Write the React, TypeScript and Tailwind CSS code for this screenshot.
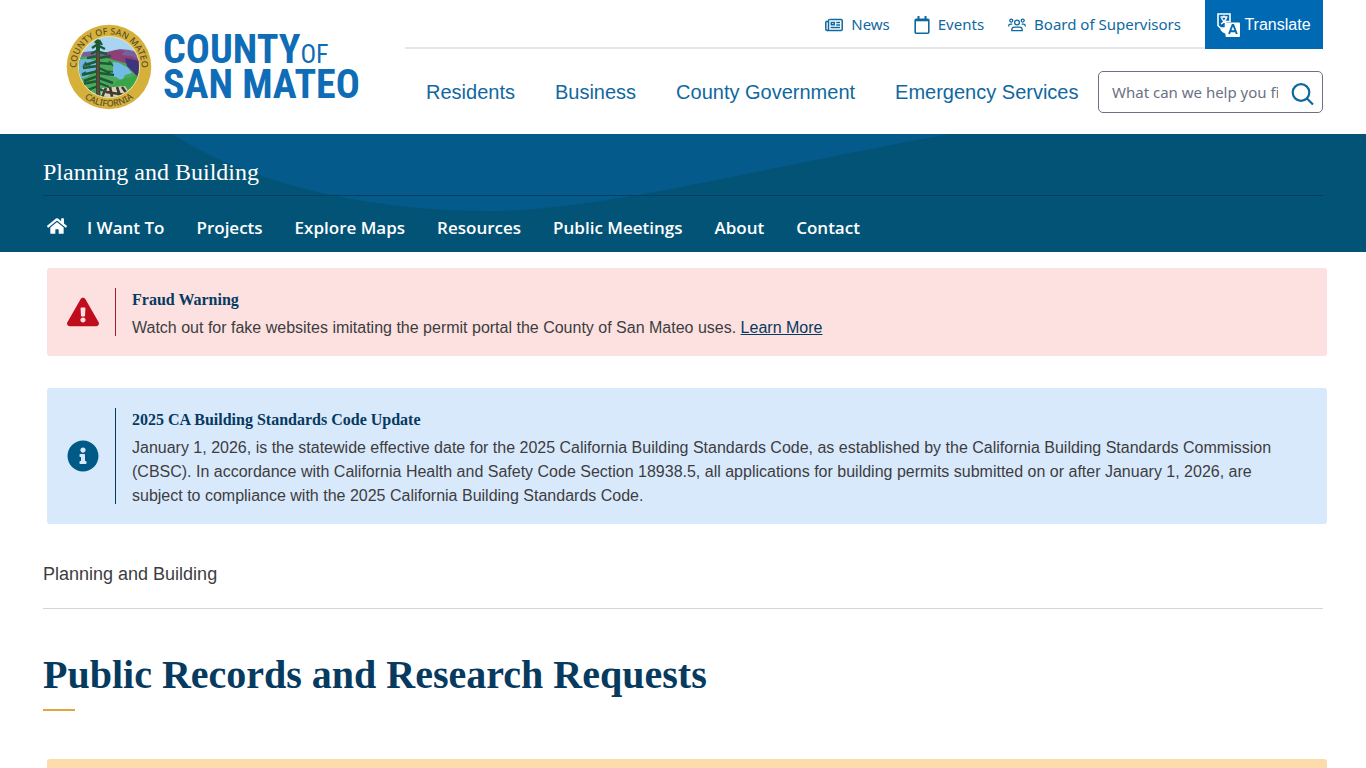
import { FaHome, FaExclamationTriangle, FaInfoCircle } from "react-icons/fa";

const topLinks = [
  { label: "News", icon: NewsIcon },
  { label: "Events", icon: CalendarIcon },
  { label: "Board of Supervisors", icon: PeopleIcon },
];

const mainLinks = ["Residents", "Business", "County Government", "Emergency Services"];

const departmentLinks = [
  "I Want To",
  "Projects",
  "Explore Maps",
  "Resources",
  "Public Meetings",
  "About",
  "Contact",
];

function NewsIcon() {
  return (
    <svg className="w-[18px] h-4" viewBox="0 0 18 16" fill="none" stroke="currentColor" strokeWidth="1.5">
      <path d="M4.5 2.500h11.500c.7 0 1.200.5 1.200 1.200v8.600c0 .7-.5 1.200-1.200 1.200H2.300c-.8 0-1.500-.7-1.500-1.500V4.500" />
      <path d="M.8 4.500h2.700M3.500 12V3.500c0-.6.4-1 1-1M3.500 12c0 .9-.4 1.500-1.200 1.500" />
      <path d="M6.300 5.500h3v2.300h-3zM11.200 5.400h3.800M11.200 8h3.800M5.600 10.600H15" />
    </svg>
  );
}

function CalendarIcon() {
  return (
    <svg className="w-4 h-[18px]" viewBox="0 0 16 18" fill="none" stroke="currentColor">
      <path d="M2.200 3.200h11.600c.6 0 1 .4 1 1v12c0 .6-.4 1-1 1H2.200c-.6 0-1-.4-1-1v-12c0-.6.4-1 1-1z" strokeWidth="1.600" />
      <path d="M1.500 4.500h13" strokeWidth="1.600" />
      <path d="M4.500 0v4M11.500 0v4" strokeWidth="2" />
    </svg>
  );
}

function PeopleIcon() {
  return (
    <svg className="w-[18px] h-4" viewBox="0 0 18 16" fill="none" stroke="currentColor" strokeWidth="1.3">
      <circle cx="3.300" cy="3.600" r="1.500" />
      <circle cx="14.700" cy="3.600" r="1.500" />
      <circle cx="9" cy="5.500" r="2.400" />
      <path d="M.7 9.400V9c0-1 .8-1.800 1.800-1.800h1.800M17.300 9.400V9c0-1-.8-1.800-1.800-1.800h-1.800" />
      <path d="M3.800 13.600v-.8c0-1.500 1.200-2.700 2.700-2.700h5c1.500 0 2.700 1.200 2.700 2.700v.8z" />
    </svg>
  );
}

function TranslateIcon() {
  return (
    <svg className="w-[23px] h-6" viewBox="0 0 23 24" fill="none">
      <path d="M1 1h12v7.500H8.500V15H3.500L1 12.500z" stroke="#fff" strokeWidth="1.600" />
      <path d="M3.500 4h7M7 2.500V4M9.500 4.500C8.500 7.500 6.500 9.500 4 11M4.500 5c1 2.300 2.500 4 5 5.500" stroke="#fff" strokeWidth="1.400" />
      <path d="M3 15.500c1 2.800 3 4.500 6 5.500v-6z" fill="#fff" />
      <rect x="8.500" y="9.500" width="14.500" height="14.500" rx="1" fill="#fff" />
      <path d="M12 21l3.500-9h.8l3.500 9M13.300 18.200h5.200" stroke="#0069b4" strokeWidth="1.900" />
    </svg>
  );
}

function SearchIcon() {
  return (
    <svg className="w-6 h-6" viewBox="0 0 24 24" fill="none" stroke="currentColor" strokeWidth="2.2">
      <circle cx="11" cy="10.500" r="8.300" />
      <path d="M17 16.500l6 6" />
    </svg>
  );
}

function Seal() {
  return (
    <svg className="w-[86px] h-[86px]" viewBox="0 0 86 86" role="img" aria-label="County seal">
      <defs>
        <clipPath id="scene">
          <circle cx="43" cy="43" r="30" />
        </clipPath>
        <path id="arc-top" d="M12.300 54a32.600 32.600 0 1 1 61.400 0" />
        <path id="arc-bottom" d="M3.500 43a39.500 39.500 0 0 0 79 0" />
      </defs>
      <circle cx="43" cy="43" r="42.300" fill="#d5b13c" />
      <circle cx="43" cy="43" r="31" fill="#eee3a0" />
      <g clipPath="url(#scene)">
        <rect width="86" height="86" fill="#a9d4f2" />
        <path d="M10 31l8-3 9-1 10 2 8-2 9-2 10 1 12 4v12H10z" fill="#78619b" />
        <path d="M40 29l10-3 9 1-4 4 10 1 12 5v7l-18-4-19-5z" fill="#8d3f78" />
        <path d="M10 34c12-3 27-2 38 2l28 8v35H10z" fill="#4ba95a" />
        <path d="M11 36c9-2 17-1 22 3l-4 7-8 7-8 2z" fill="#70b5df" />
        <path d="M47 38c6 0 9 3 14 5l5 6-7 2-3 6-6-4-7-1 4-5z" fill="#71bce5" />
        <path d="M59 34l16 3v20l-7-8-7-7z" fill="#3d347c" />
        <path d="M51 57c8-4 15-2 24-8v23H38z" fill="#37a548" />
        <path d="M36 64l23-2 9 14H34z" fill="#d8d1bb" />
        <path d="M40 64l-4 9M44 63l2 10M51 63l3 9M56 63l6 8M40 68l20 3" stroke="#44372d" strokeWidth="2.600" />
        <path d="M32 74V16" stroke="#1d5937" strokeWidth="4" />
        {/* branches, top to bottom */}
        <path
          d="M32 15l-3 4M33 16l3 5M32 20l-6 4M33 22l6 3M32 26l-7 4M33 28l8 2M32 32l-11 2M33 34l12-2M32 37l-13 4M33 39l13 1M32 42l-15 2M33 44l11 5M32 47l-16 4M33 49l15 2M32 52l-14 5M33 54l14 5M32 57l-16 3M33 59l10 4M32 62l-13 5M33 65l8 3"
          stroke="#1d5937"
          strokeWidth="2.400"
        />
        <path d="M20 38l-3 5M24 40l-2 4M43 37l4 5M20 48l-4 2M42 47l5 1M21 58l-4 5M26 64l-5 6" stroke="#24643d" strokeWidth="1.600" />
        <path d="M32 28v46" stroke="#8a3a38" strokeWidth="1.800" />
      </g>
      <text className="font-['Noto_Sans',sans-serif] font-medium text-[9px]" fill="#5d4f26">
        <textPath href="#arc-top" startOffset="50%" textAnchor="middle">
          COUNTY OF SAN MATEO
        </textPath>
      </text>
      <text className="font-['Noto_Sans',sans-serif] font-medium text-[9px]" fill="#5d4f26">
        <textPath href="#arc-bottom" startOffset="50%" textAnchor="middle">
          CALIFORNIA
        </textPath>
      </text>
    </svg>
  );
}

function Header() {
  return (
    <header className="max-w-[1280px] h-[134px] mx-auto flex justify-between">
      <a href="#" className="flex items-center gap-[11px] pl-[23px] text-[#0f6cb6]">
        <Seal />
        <span className="flex flex-col font-['Roboto_Condensed',Roboto,sans-serif] font-bold text-[40px] leading-[35px] whitespace-nowrap">
          <span>
            COUNTY<span className="text-[26px] leading-none font-normal">OF</span>
          </span>
          <span>SAN MATEO</span>
        </span>
      </a>
      <div className="w-[918px]">
        <div className="flex">
          <nav className="flex-1 flex justify-end items-center gap-6 pt-[2px] pr-6 border-b-2 border-gray-200 font-['Noto_Sans',sans-serif] text-[15px] text-[#0f689f]">
            {topLinks.map(({ label, icon: Icon }) => (
              <a key={label} href="#" className="flex items-center gap-2">
                <Icon />
                {label}
              </a>
            ))}
          </nav>
          <button className="w-[118px] h-[49px] flex items-center justify-center gap-1 bg-[#0069b4] text-white text-base">
            <TranslateIcon />
            Translate
          </button>
        </div>
        <div className="flex items-center justify-between pl-[21px] pt-[22px]">
          <nav className="flex gap-10 text-xl text-[#0f689f]">
            {mainLinks.map((label) => (
              <a key={label} href="#" className="whitespace-nowrap">
                {label}
              </a>
            ))}
          </nav>
          <form className="w-[225px] h-[42px] flex items-center pl-[13px] pr-2 gap-3 border border-gray-500 rounded-[5px]">
            <input
              type="text"
              aria-label="Search"
              placeholder="What can we help you find?"
              className="flex-1 min-w-0 font-['Noto_Sans',sans-serif] text-[15px] placeholder:text-gray-500 outline-none"
            />
            <button type="button" aria-label="Submit search" className="pt-1 text-[#0f689f]">
              <SearchIcon />
            </button>
          </form>
        </div>
      </div>
    </header>
  );
}

function DepartmentBar() {
  return (
    <div className="relative h-[118px] overflow-hidden bg-[#035377] text-white">
      <svg className="absolute left-0 top-0 w-[1366px] h-[118px]" viewBox="0 0 1366 118" aria-hidden="true">
        <path d="M172 0C250 50 370 77 485 77C600 77 740 38 950 0z" fill="#045a8a" />
      </svg>
      <div className="relative max-w-[1280px] mx-auto">
        <div className="h-[62px] pt-6 border-b border-[#063d63]">
          <a href="#" className="font-['Liberation_Serif',serif] text-2xl leading-7">
            Planning and Building
          </a>
        </div>
        <nav className="flex items-center gap-8 pt-5 pl-1 font-['Open_Sans',sans-serif] font-semibold text-[17px] leading-6">
          <a href="#" aria-label="Home" className="-mr-3 pb-1">
            <FaHome className="w-5 h-5" />
          </a>
          {departmentLinks.map((label) => (
            <a key={label} href="#">
              {label}
            </a>
          ))}
        </nav>
      </div>
    </div>
  );
}

export default function App() {
  return (
    <div className="h-screen overflow-hidden bg-white font-['Liberation_Sans',sans-serif] text-[#3d3d3f]">
      <Header />
      <DepartmentBar />
      <main className="max-w-[1280px] mx-auto pt-4">
        <section className="ml-1 -mr-1 mb-8 py-5 pl-5 pr-12 flex items-center rounded-[3px] bg-[#fce1e0]">
          <FaExclamationTriangle className="w-8 h-8 mr-4 shrink-0 text-[#c00d1e]" />
          <div className="border-l border-[#a61c2b] pl-4">
            <h2 className="mb-1 font-['Liberation_Serif',serif] font-bold text-base text-[#063a5f]">Fraud Warning</h2>
            <p className="-mb-1 leading-6">
              Watch out for fake websites imitating the permit portal the County of San Mateo uses.{" "}
              <a href="#" className="underline text-[#063a5f]">
                Learn More
              </a>
            </p>
          </div>
        </section>
        <section className="ml-1 -mr-1 py-5 pl-5 pr-12 flex items-center rounded-[3px] bg-[#d9e9fc]">
          <FaInfoCircle className="w-8 h-8 mr-4 shrink-0 text-[#005a87]" />
          <div className="border-l border-[#063a5f] pl-4">
            <h2 className="mb-1 font-['Liberation_Serif',serif] font-bold text-base text-[#063a5f]">
              2025 CA Building Standards Code Update
            </h2>
            <p className="-mb-1 leading-6">
              January 1, 2026, is the statewide effective date for the 2025 California Building Standards Code, as
              established by the California Building Standards Commission (CBSC). In accordance with California Health
              and Safety Code Section 18938.5, all applications for building permits submitted on or after January 1,
              2026, are subject to compliance with the 2025 California Building Standards Code.
            </p>
          </div>
        </section>
        <nav className="mt-9 pb-5 border-b border-gray-300 text-lg">
          <a href="#">Planning and Building</a>
        </nav>
        <h1 className="mt-10 font-['Liberation_Serif',serif] font-bold text-[40px] leading-[52px] text-[#063a5f]">
          Public Records and Research Requests
        </h1>
        <div className="w-8 h-[2px] mt-2 bg-[#e0a83c]" />
        <section className="ml-1 -mr-1 mt-12 h-24 rounded-[3px] bg-[#fddcab]" />
      </main>
    </div>
  );
}
